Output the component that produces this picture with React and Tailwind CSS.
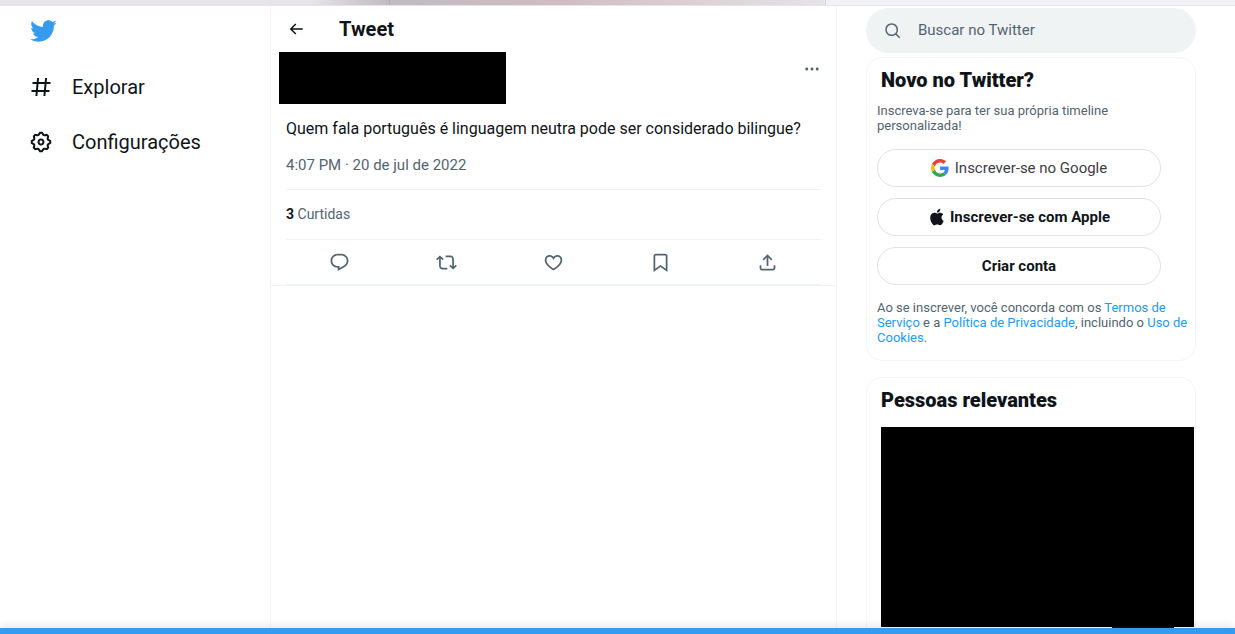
import React, { useState } from 'react';

const ICONS = {
  bird: 'M23.643 4.937c-.835.37-1.732.62-2.675.733.962-.576 1.7-1.49 2.048-2.578-.9.534-1.897.922-2.958 1.13-.85-.904-2.06-1.47-3.4-1.47-2.572 0-4.658 2.086-4.658 4.66 0 .364.042.718.12 1.06-3.873-.195-7.304-2.05-9.602-4.868-.4.69-.63 1.49-.63 2.342 0 1.616.823 3.043 2.072 3.878-.764-.025-1.482-.234-2.11-.583v.06c0 2.257 1.605 4.14 3.737 4.568-.392.106-.803.162-1.227.162-.3 0-.593-.028-.877-.082.593 1.85 2.313 3.198 4.352 3.234-1.595 1.25-3.604 1.995-5.786 1.995-.376 0-.747-.022-1.112-.065 2.062 1.323 4.51 2.093 7.14 2.093 8.57 0 13.255-7.098 13.255-13.254 0-.2-.005-.402-.014-.602.91-.658 1.7-1.477 2.323-2.41z',
  hash: 'M10.09 3.098L9.72 7h5.99l.39-4.089 1.99.187L17.72 7h3.78v2h-3.97l-.56 6h3.53v2h-3.72l-.38 4.089-1.99-.187.36-3.902H8.78l-.38 4.089-1.99-.187L6.77 17H2.5v-2h4.46l.56-6H3.5V7h4.21l.39-4.089 1.99.187zM14.96 15l.56-6H9.53l-.56 6h5.99z',
  gear: 'M10.54 1.75h2.92l1.57 2.36c.11.17.32.25.53.21l2.53-.59 2.17 2.17-.58 2.54c-.05.2.04.41.21.53l2.36 1.57v2.92l-2.36 1.57c-.17.12-.26.33-.21.53l.58 2.54-2.17 2.17-2.53-.59c-.21-.04-.42.04-.53.21l-1.57 2.36h-2.92l-1.58-2.36c-.11-.17-.32-.25-.52-.21l-2.54.59-2.17-2.17.58-2.54c.05-.2-.03-.41-.21-.53l-2.35-1.57v-2.92L4.1 8.97c.18-.12.26-.33.21-.53L3.73 5.9 5.9 3.73l2.54.59c.2.04.41-.04.52-.21l1.58-2.36zm1.07 2l-.98 1.47C10.05 6.08 9 6.5 7.99 6.27l-1.46-.34-.6.6.33 1.46c.24 1.01-.18 2.07-1.05 2.64l-1.46.98v.78l1.46.98c.87.57 1.29 1.63 1.05 2.64l-.33 1.46.6.6 1.46-.34c1.01-.23 2.06.19 2.64 1.05l.98 1.47h.78l.97-1.47c.58-.86 1.63-1.28 2.65-1.05l1.45.34.61-.6-.34-1.46c-.23-1.01.18-2.07 1.05-2.64l1.47-.98v-.78l-1.47-.98c-.87-.57-1.28-1.63-1.05-2.64l.34-1.46-.61-.6-1.45.34c-1.02.23-2.07-.19-2.65-1.05l-.97-1.47h-.78zM12 10.5c-.83 0-1.5.67-1.5 1.5s.67 1.5 1.5 1.5c.83 0 1.5-.67 1.5-1.5s-.67-1.5-1.5-1.5zM8.5 12c0-1.93 1.56-3.5 3.5-3.5 1.93 0 3.5 1.57 3.5 3.5s-1.57 3.5-3.5 3.5c-1.94 0-3.5-1.57-3.5-3.5z',
  back: 'M7.414 13l5.043 5.04-1.414 1.42L3.586 12l7.457-7.46 1.414 1.42L7.414 11H21v2H7.414z',
  more: 'M3 12c0-1.1.9-2 2-2s2 .9 2 2-.9 2-2 2-2-.9-2-2zm9 2c1.1 0 2-.9 2-2s-.9-2-2-2-2 .9-2 2 .9 2 2 2zm7 0c1.1 0 2-.9 2-2s-.9-2-2-2-2 .9-2 2 .9 2 2 2z',
  reply: 'M1.751 10c0-4.42 3.584-8 8.005-8h4.366c4.49 0 8.129 3.64 8.129 8.13 0 2.96-1.607 5.68-4.196 7.11l-8.054 4.46v-3.69h-.067c-4.49.1-8.183-3.51-8.183-8.01zm8.005-6c-3.317 0-6.005 2.69-6.005 6 0 3.37 2.77 6.08 6.138 6.01l.351-.01h1.761v2.3l5.087-2.81c1.951-1.08 3.163-3.13 3.163-5.36 0-3.39-2.744-6.13-6.129-6.13H9.756z',
  retweet: 'M4.5 3.88l4.432 4.14-1.364 1.46L5.5 7.55V16c0 1.1.896 2 2 2H13v2H7.5c-2.209 0-4-1.79-4-4V7.55L1.432 9.48.068 8.02 4.5 3.88zM16.5 6H11V4h5.5c2.209 0 4 1.79 4 4v8.45l2.068-1.93 1.364 1.46-4.432 4.14-4.432-4.14 1.364-1.46 2.068 1.93V8c0-1.1-.896-2-2-2z',
  heart: 'M16.697 5.5c-1.222-.06-2.679.51-3.89 2.16l-.805 1.09-.806-1.09C9.984 6.01 8.526 5.44 7.304 5.5c-1.243.07-2.349.78-2.91 1.91-.552 1.12-.633 2.78.479 4.82 1.074 1.97 3.257 4.27 7.129 6.61 3.87-2.34 6.052-4.64 7.126-6.61 1.111-2.04 1.03-3.7.477-4.82-.561-1.13-1.666-1.84-2.908-1.91zm4.187 7.69c-1.351 2.48-4.001 5.12-8.379 7.67l-.503.3-.504-.3c-4.379-2.55-7.029-5.19-8.382-7.67-1.36-2.5-1.41-4.86-.514-6.67.887-1.79 2.647-2.91 4.601-3.01 1.651-.09 3.368.56 4.798 2.01 1.429-1.45 3.146-2.1 4.796-2.01 1.954.1 3.714 1.22 4.601 3.01.896 1.81.846 4.17-.514 6.67z',
  bookmark: 'M4 4.5C4 3.12 5.119 2 6.5 2h11C18.881 2 20 3.12 20 4.5v18.44l-8-5.71-8 5.71V4.5zM6.5 4c-.276 0-.5.22-.5.5v14.56l6-4.29 6 4.29V4.5c0-.28-.224-.5-.5-.5h-11z',
  share: 'M12 2.59l5.7 5.7-1.41 1.42L13 6.41V16h-2V6.41l-3.3 3.3-1.41-1.42L12 2.59zM21 15l-.02 3.51c0 1.38-1.12 2.49-2.5 2.49H5.5C4.11 21 3 19.88 3 18.5V15h2v3.5c0 .28.22.5.5.5h12.98c.28 0 .5-.22.5-.5L19 15h2z',
  search: 'M10.25 3.75c-3.59 0-6.5 2.91-6.5 6.5s2.91 6.5 6.5 6.5c1.795 0 3.419-.726 4.596-1.904 1.178-1.177 1.904-2.801 1.904-4.596 0-3.59-2.91-6.5-6.5-6.5zm-8.5 6.5c0-4.694 3.806-8.5 8.5-8.5s8.5 3.806 8.5 8.5c0 1.986-.682 3.815-1.824 5.262l4.781 4.781-1.414 1.414-4.781-4.781c-1.447 1.142-3.276 1.824-5.262 1.824-4.694 0-8.5-3.806-8.5-8.5z',
  apple: 'M16.365 1.43c0 1.14-.493 2.27-1.177 3.08-.744.9-1.99 1.57-2.987 1.57-.12 0-.23-.02-.3-.03-.01-.06-.04-.22-.04-.39 0-1.15.572-2.27 1.206-2.98.804-.94 2.142-1.64 3.248-1.68.03.13.05.28.05.43zm4.565 15.71c-.03.07-.463 1.58-1.518 3.12-.945 1.34-1.94 2.71-3.43 2.71-1.517 0-1.9-.88-3.63-.88-1.698 0-2.302.91-3.67.91-1.377 0-2.332-1.26-3.428-2.8-1.287-1.82-2.323-4.63-2.323-7.28 0-4.28 2.797-6.55 5.552-6.55 1.448 0 2.675.95 3.6.95.865 0 2.222-1.01 3.902-1.01.613 0 2.886.06 4.374 2.19-.13.09-2.383 1.37-2.383 4.19 0 3.26 2.854 4.42 2.955 4.45z',
};

const Icon = ({ name, className }) => (
  <svg viewBox="0 0 24 24" fill="currentColor" aria-hidden="true" className={className}>
    <path d={ICONS[name]} />
  </svg>
);

const GoogleIcon = () => (
  <svg viewBox="0 0 48 48" aria-hidden="true" className="size-[18px]">
    <path fill="#EA4335" d="M24 9.5c3.54 0 6.71 1.22 9.21 3.6l6.85-6.85C35.9 2.38 30.47 0 24 0 14.62 0 6.51 5.38 2.56 13.22l7.98 6.19C12.43 13.72 17.74 9.5 24 9.5z" />
    <path fill="#4285F4" d="M46.98 24.55c0-1.57-.15-3.09-.38-4.55H24v9.02h12.94c-.58 2.96-2.26 5.48-4.78 7.18l7.73 6c4.51-4.18 7.09-10.36 7.09-17.65z" />
    <path fill="#FBBC05" d="M10.53 28.59c-.48-1.45-.76-2.99-.76-4.59s.27-3.14.76-4.59l-7.98-6.19C.92 16.46 0 20.12 0 24c0 3.88.92 7.54 2.56 10.78l7.97-6.19z" />
    <path fill="#34A853" d="M24 48c6.48 0 11.93-2.13 15.89-5.81l-7.73-6c-2.15 1.45-4.92 2.3-8.16 2.3-6.26 0-11.57-4.22-13.47-9.91l-7.98 6.19C6.51 42.62 14.62 48 24 48z" />
  </svg>
);

const NAV = [
  { label: 'Explorar', icon: 'hash' },
  { label: 'Configurações', icon: 'gear' },
];

const ACTIONS = [
  { label: 'Responder', icon: 'reply' },
  { label: 'Retweetar', icon: 'retweet' },
  { label: 'Curtir', icon: 'heart' },
  { label: 'Salvar', icon: 'bookmark' },
  { label: 'Compartilhar', icon: 'share' },
];

const Sidebar = () => (
  <header className="w-[270px] shrink-0 pl-[29px] pt-[11px]">
    <a href="#inicio" aria-label="Twitter" className="block w-7">
      <Icon name="bird" className="size-7 text-[#359bf0]" />
    </a>
    <nav className="mt-[14px] flex flex-col">
      {NAV.map(item => (
        <a key={item.label} href="#nav" className="flex h-[55px] items-center gap-[19px] text-[20px] leading-6 text-[#0f1419]">
          <Icon name={item.icon} className="size-6" />
          {item.label}
        </a>
      ))}
    </nav>
  </header>
);

const Tweet = () => (
  <main className="min-w-0 flex-1 border-x border-[#f3f5f6]">
    <div className="flex h-[46px] items-center gap-[34px] pl-4">
      <button type="button" aria-label="Voltar">
        <Icon name="back" className="size-[18px] text-[#0f1419]" />
      </button>
      <h1 className="text-[20px] leading-6 font-bold">Tweet</h1>
    </div>

    <article className="border-b border-[#eff3f4] px-[15px]">
      <div className="-ml-[7px] flex items-start justify-between">
        <div className="h-[52px] w-[227px] bg-black" />
        <button type="button" aria-label="Mais" className="mt-2 text-[#536471]">
          <Icon name="more" className="size-[18px]" />
        </button>
      </div>
      <p className="mt-[13px] text-[16px] leading-6">
        Quem fala português é linguagem neutra pode ser considerado bilingue?
      </p>
      <p className="mt-3 text-[15px] leading-6 text-[#536471]">
        <a href="#data">4:07 PM · 20 de jul de 2022</a>
      </p>

      <div className="mt-3 flex h-[51px] items-center border-y border-[#eff3f4] text-[14px] text-[#536471]">
        <a href="#curtidas"><b className="text-[#0f1419]">3</b> Curtidas</a>
      </div>

      <div className="flex h-[45px] items-center justify-around border-b border-[#eff3f4]">
        {ACTIONS.map(action => (
          <button key={action.label} type="button" aria-label={action.label} className="text-[#536471]">
            <Icon name={action.icon} className="size-[21px]" />
          </button>
        ))}
      </div>
    </article>
  </main>
);

const SignupButton = ({ children, className = 'gap-1 font-bold text-[#0f1419]' }) => (
  <button type="button" className={`flex h-[38px] w-full items-center justify-center rounded-full border border-[#dde3e7] text-[15px] leading-5 ${className}`}>
    {children}
  </button>
);

const Aside = () => {
  const [query, setQuery] = useState('');

  return (
    <aside className="flex w-[398px] shrink-0 flex-col pt-0.5 pr-[39px] pl-[29px]">
      <label className="flex h-[45px] shrink-0 items-center gap-4 rounded-full bg-[#eff3f4] px-[18px] text-[#536471]">
        <Icon name="search" className="size-[18px]" />
        <input
          type="text"
          aria-label="Buscar no Twitter"
          placeholder="Buscar no Twitter"
          value={query}
          onChange={e => setQuery(e.target.value)}
          className="min-w-0 flex-1 text-[15px] outline-none placeholder:text-[#536471]"
        />
      </label>

      <section className="mt-1 rounded-2xl border border-[#f3f5f6] pt-2.5 pr-1 pb-[15px] pl-2.5">
        <h2 className="pl-1 text-[20px] leading-6 font-black">Novo no Twitter?</h2>
        <p className="mt-[11px] mr-8 text-[13px] leading-[15px] text-[#536471]">
          Inscreva-se para ter sua própria timeline personalizada!
        </p>
        <div className="mt-4 mr-[30px] flex flex-col gap-[11px]">
          <SignupButton className="gap-1.5 font-normal text-[#3c4043]">
            <GoogleIcon />
            Inscrever-se no Google
          </SignupButton>
          <SignupButton>
            <Icon name="apple" className="size-[18px]" />
            Inscrever-se com Apple
          </SignupButton>
          <SignupButton>Criar conta</SignupButton>
        </div>
        <p className="mt-[15px] text-[13px] leading-[15px] text-[#536471]">
          Ao se inscrever, você concorda com os <a href="#termos" className="text-[#1d9bf0]">Termos de Serviço</a> e a{' '}
          <a href="#privacidade" className="text-[#1d9bf0]">Política de Privacidade</a>, incluindo o{' '}
          <a href="#cookies" className="text-[#1d9bf0]">Uso de Cookies</a>.
        </p>
      </section>

      <section className="mt-4 flex-1 rounded-t-2xl border border-b-0 border-[#f3f5f6] pt-2.5 pr-px pl-[14px]">
        <h2 className="text-[20px] leading-6 font-black">Pessoas relevantes</h2>
        <div className="mt-[15px] h-[200px] bg-black" />
        <div className="mr-5 ml-auto h-px w-[62px] bg-[#0f1419]" />
      </section>
    </aside>
  );
};

const App = () => (
  <div className="flex min-h-screen flex-col bg-white font-[Roboto,sans-serif] text-[#0f1419]">
    {/* Browser tab strip */}
    <div className="flex h-1.5 shrink-0 border-b border-[#e6e3ea]">
      <div className="w-[390px] border-r border-[#b0aab3] bg-linear-to-r from-[#e6e3e9] from-80% to-[#c0bac3]" />
      <div className="flex-1 bg-linear-to-r from-[#c0bac3] via-[#d0bdc1] via-40% to-[#e6e3e9]" />
      <div className="w-[410px] border-l border-[#d5d2d9] bg-[#f3f1f8]" />
    </div>

    <div className="flex flex-1">
      <Sidebar />
      <Tweet />
      <Aside />
    </div>

    <footer className="h-1.5 shrink-0 bg-[#359bf0] shadow-[0_-2px_8px_rgba(0,0,0,0.12)]" />
  </div>
);

export default App;
